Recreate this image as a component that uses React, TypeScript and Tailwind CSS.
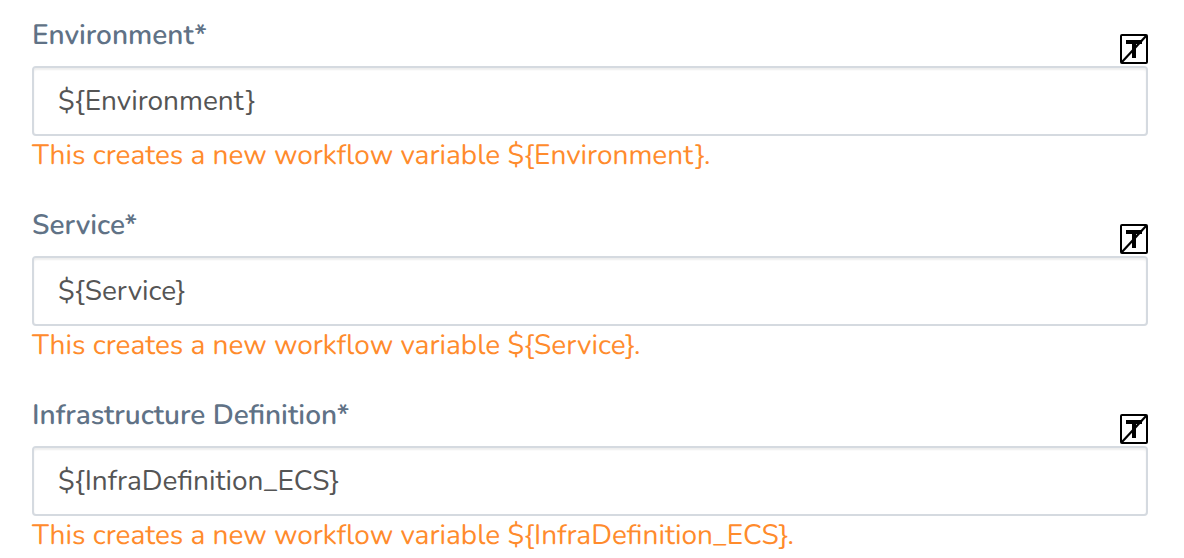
import { useState } from "react";

type Field = { id: string; label: string; variable: string };

const fields: Field[] = [
  { id: "environment", label: "Environment", variable: "${Environment}" },
  { id: "service", label: "Service", variable: "${Service}" },
  { id: "infrastructure", label: "Infrastructure Definition", variable: "${InfraDefinition_ECS}" },
];

function TemplateOffIcon() {
  return (
    <svg viewBox="0 0 28 30" className="block h-[30px] w-7" fill="none" stroke="#000" aria-hidden="true">
      <rect x="1" y="1" width="26" height="28" rx="1" strokeWidth="2" />
      <path d="M6 8H22M14 8V24" strokeWidth="4" />
      <path d="M1.5 28.5L26.5 1.5" strokeWidth="2.2" />
    </svg>
  );
}

function VariableField({ id, label, variable }: Field) {
  const [value, setValue] = useState(variable);
  return (
    <div className="flex flex-col">
      <div className="flex items-start justify-between pb-0.5">
        <label htmlFor={id} className="font-semibold text-[#607286]">
          {label}*
        </label>
        <button type="button" aria-label={`Toggle template for ${label}`} className="mt-[18px]">
          <TemplateOffIcon />
        </button>
      </div>
      <input
        id={id}
        type="text"
        value={value}
        onChange={(e) => setValue(e.target.value)}
        aria-describedby={`${id}-hint`}
        className="h-[70px] w-full rounded border-2 border-[#d5dae0] bg-white px-6 text-[#555555] shadow-[inset_0_2px_2px_rgba(0,0,0,0.07)] outline-none"
      />
      <p id={`${id}-hint`} className="text-[#ff8b2c]">
        This creates a new workflow variable {variable}.
      </p>
    </div>
  );
}

export default function App() {
  return (
    <form className="flex flex-col gap-8 bg-white pt-4 pr-9 pl-8 font-[Nunito,Lato,sans-serif] text-[28px] leading-[38px] antialiased [text-rendering:geometricPrecision]">
      {fields.map((field) => (
        <VariableField key={field.id} {...field} />
      ))}
    </form>
  );
}
